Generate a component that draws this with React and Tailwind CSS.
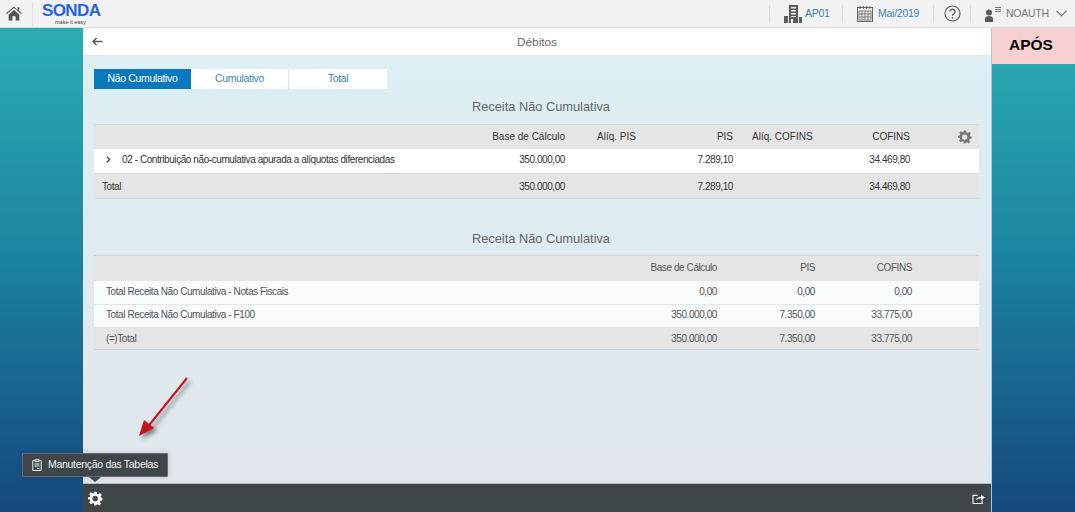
const F = "[font-family:'Liberation_Sans',Arial,sans-serif]";

function Gear({ className }) {
  return (
    <svg viewBox="0 0 24 24" className={className} fill="currentColor">
      <path fillRule="evenodd" d="M10 1h4l.6 3.2 1.9.8 2.7-1.9 2.8 2.8-1.9 2.7.8 1.9L23 11v4l-3.1.6-.8 1.9 1.8 2.7-2.8 2.8-2.7-1.9-1.9.8L13 23h-3l-.6-3.1-1.9-.8-2.7 1.9-2.8-2.8 1.9-2.7-.8-1.9L0 13v-3l3.1-.6.8-1.9L2 4.9l2.8-2.8 2.7 1.9 1.9-.8L10 1zm1.5 6.5a4.5 4.5 0 1 0 0 9 4.5 4.5 0 0 0 0-9z" />
    </svg>
  );
}

function Home() {
  return (
    <svg viewBox="0 0 18 16" className="w-[16px] h-[15px]" fill="#555">
      <path d="M9 0 0 7.6l.9 1L9 1.9l8.1 6.7.9-1-3-2.5V1h-2v3.4L9 0z" />
      <path d="M3 9 9 4l6 5v7h-4.2v-5H7.2v5H3V9z" />
    </svg>
  );
}

function Building() {
  return (
    <svg viewBox="0 0 18 18" className="w-[18px] h-[18px]" fill="#5c5c5c">
      <path fillRule="evenodd" d="M5 0h9v18H9v-4H7v4H5V0zm2 2v1.5h5V2H7zm0 3v1.5h5V5H7zm0 3v1.5h5V8H7zm0 3v1h5v-1H7z" />
      <path d="M0 11h4v7H0zM15 12h3v6h-3z" />
    </svg>
  );
}

function Calendar() {
  return (
    <svg viewBox="0 0 16 16" className="w-[16px] h-[16px]" fill="none" stroke="#666" strokeWidth="1">
      <rect x="0.5" y="1.5" width="15" height="14" />
      <path d="M3 0v3M6.3 0v3M9.6 0v3M13 0v3" />
      <path d="M2 5h12v9H2zM5 5v9M8 5v9M11 5v9M2 8h12M2 11h12" strokeWidth="0.8" />
    </svg>
  );
}

function Help() {
  return (
    <svg viewBox="0 0 18 18" className="w-[17px] h-[17px]" fill="none" stroke="#5a5a5a">
      <circle cx="9" cy="9" r="8" strokeWidth="1.2" />
      <path d="M6.3 7a2.7 2.5 0 1 1 4.2 2.1c-1 .7-1.5 1.1-1.5 2.3" strokeWidth="1.4" />
      <path d="M9 12.7v1.6" strokeWidth="1.6" />
    </svg>
  );
}

function User() {
  return (
    <svg viewBox="0 0 18 16" className="w-[18px] h-[16px]" fill="#5a5a5a">
      <circle cx="5" cy="6.5" r="3" />
      <path d="M1 16v-3.5c0-1.4 1.5-2.5 4-2.5s4 1.1 4 2.5V16H1z" />
      <path d="M11 1h6v1h-6zM11 3h6v1h-6zM11 5h6v1h-6z" fill="#777" />
    </svg>
  );
}

function Chevron() {
  return (
    <svg viewBox="0 0 12 7" className="w-[11px] h-[7px]" fill="none" stroke="#666" strokeWidth="1.1">
      <path d="M.6.6 6 6l5.4-5.4" />
    </svg>
  );
}

function Sep() {
  return <div className="w-px h-[18px] bg-[#dcdcdc]" />;
}

function Header() {
  return (
    <header className="h-[28px] shrink-0 flex items-center bg-[#f2f2f2] border-b border-[#dcdcdc] text-[10.5px] tracking-[-0.25px]">
      <div className="w-[32px] flex justify-end pr-[10px]">
        <Home />
      </div>
      <div className="w-px h-[24px] bg-[#e2e2e2]" />
      <div className="ml-[9px] w-[62px] flex flex-col items-start">
        <span className="text-[#2762e3] font-bold text-[17px] leading-[16px] tracking-[-0.6px]">SONDA</span>
        <span className="text-[#444] text-[5.5px] leading-[6px] tracking-normal ml-[13px]">make it easy</span>
      </div>
      <div className="flex-1" />
      <Sep />
      <div className="w-[72px] flex items-center gap-[3px] pl-[14px] text-[#3b84b5]">
        <Building />
        <span>AP01</span>
      </div>
      <Sep />
      <div className="w-[90px] flex items-center gap-[5px] pl-[14px] text-[#3b84b5]">
        <Calendar />
        <span>Mai/2019</span>
      </div>
      <Sep />
      <div className="w-[36px] flex justify-center">
        <Help />
      </div>
      <Sep />
      <div className="w-[104px] flex items-center pl-[13px] text-[#777]">
        <User />
        <span className="ml-[4px]">NOAUTH</span>
        <span className="ml-[7px]"><Chevron /></span>
      </div>
    </header>
  );
}

function Tabs() {
  return (
    <div className="ml-[11px] mt-[13px] w-[293px] h-[20px] flex text-[10.5px] tracking-[-0.35px] leading-[19px] text-center bg-white">
      <div className="w-[97px] bg-[#0a78bd] text-white">Não Cumulativo</div>
      <div className="w-[98px] text-[#3b84b5] border-r border-[#e4e4e4]">Cumulativo</div>
      <div className="w-[98px] text-[#3b84b5]">Total</div>
    </div>
  );
}

function Title({ children, className }) {
  return <div className={`pl-[8px] text-center text-[12.8px] leading-[18px] text-[#666] ${className}`}>{children}</div>;
}

function T1Row({ className, first, vals, gear }) {
  return (
    <div className={`flex items-center text-[#333] ${className}`}>
      <div className="w-[471px] flex items-center justify-between">
        <div className="flex-1">{first}</div>
        <div className="text-right">{vals[0]}</div>
      </div>
      <div className="w-[72px] pl-[32px] whitespace-nowrap">{vals[1]}</div>
      <div className="w-[96px] text-right">{vals[2]}</div>
      <div className="w-[88px] pl-[19px] whitespace-nowrap">{vals[3]}</div>
      <div className="w-[89px] text-right">{vals[4]}</div>
      <div className="flex-1 flex justify-end pr-[7px]">{gear}</div>
    </div>
  );
}

function Table1() {
  return (
    <div className="mx-[11px] mt-[8px] w-[885px]">
      <T1Row
        className="h-[25px] text-[10px] bg-[#e5e5e5] border-t border-[#d9d9d9] pb-[2px]"
        first=""
        vals={["Base de Cálculo", "Alíq. PIS", "PIS", "Alíq. COFINS", "COFINS"]}
        gear={<Gear className="w-[14px] h-[14px] text-[#777] relative top-px" />}
      />
      <T1Row
        className="h-[24px] text-[10px] tracking-[-0.42px] bg-white pb-[3px]"
        first={
          <div className="flex items-center pl-[12px]">
            <svg viewBox="0 0 6 8" className="w-[5px] h-[7px]" fill="none" stroke="#444" strokeWidth="1.6">
              <path d="M1 .6 4.4 4 1 7.4" />
            </svg>
            <span className="ml-[11px]">02 - Contribuição não-cumulativa apurada a alíquotas diferenciadas</span>
          </div>
        }
        vals={["350.000,00", "", "7.289,10", "", "34.469,80"]}
      />
      <T1Row
        className="h-[26px] text-[10px] tracking-[-0.42px] bg-[#e5e5e5] border-t border-[#d9d9d9] border-b border-b-[#d4dcde]"
        first={<span className="pl-[8px]">Total</span>}
        vals={["350.000,00", "", "7.289,10", "", "34.469,80"]}
      />
    </div>
  );
}

function T2Row({ className, label, vals }) {
  return (
    <div className={`flex items-center text-[10px] tracking-[-0.42px] text-[#555] ${className}`}>
      <div className="flex-1 pl-[12px]">{label}</div>
      <div className="w-[100px] text-right">{vals[0]}</div>
      <div className="w-[98px] text-right">{vals[1]}</div>
      <div className="w-[97px] text-right">{vals[2]}</div>
      <div className="w-[67px]" />
    </div>
  );
}

function Table2() {
  return (
    <div className="mx-[11px] mt-[7px] w-[885px]">
      <T2Row
        className="h-[25px] pb-[2px] bg-[#e5e5e5] border-t border-[#d4d4d4]"
        label=""
        vals={["Base de Cálculo", "PIS", "COFINS"]}
      />
      <T2Row
        className="h-[24px] pb-[2px] bg-[#f7fbfc] border-t border-[#dfe8ea]"
        label="Total Receita Não Cumulativa - Notas Fiscais"
        vals={["0,00", "0,00", "0,00"]}
      />
      <T2Row
        className="h-[23px] pb-[3px] bg-[#f7fbfc] border-t border-[#dfe8ea]"
        label="Total Receita Não Cumulativa - F100"
        vals={["350.000,00", "7.350,00", "33.775,00"]}
      />
      <T2Row
        className="h-[23px] bg-[#e5e5e5] border-b border-[#d2d5d7]"
        label="(=)Total"
        vals={["350.000,00", "7.350,00", "33.775,00"]}
      />
    </div>
  );
}

function Center() {
  return (
    <main className="w-[908px] flex flex-col">
      <div className="h-[28px] shrink-0 bg-white border-b border-[#e6e6e6] flex items-center relative">
        <svg viewBox="0 0 12 10" className="absolute left-[8px] top-[9px] w-[12px] h-[9px]" fill="none" stroke="#555" strokeWidth="1.5">
          <path d="M12 5H1.5M5.5 1 1.5 5l4 4" />
        </svg>
        <div className="w-full pt-[2px] text-center text-[11.8px] text-[#666]">Débitos</div>
      </div>
      <div className="flex-1 bg-gradient-to-b from-[#ddeff3] to-[#e0e6ec]">
        <Tabs />
        <Title className="mt-[9px]">Receita Não Cumulativa</Title>
        <Table1 />
        <Title className="mt-[31px]">Receita Não Cumulativa</Title>
        <Table2 />
      </div>
      <div className="h-[29px] shrink-0 bg-[#3f4649] border-t border-[#b8bfc3] flex items-center justify-between pl-[5px] pr-[5px]">
        <Gear className="w-[15px] h-[15px] text-white" />
        <svg viewBox="0 0 14 12" className="w-[13px] h-[11px] mr-px" fill="none" stroke="#f2f2f2" strokeWidth="1.3">
          <path d="M6 2.5H1v9h10V8" />
          <path d="M4 8c.6-2.7 2.8-4 5.6-4V1.6L14 5l-4.4 3.3V6C7.4 6 5.5 6.6 4 8z" fill="#f2f2f2" stroke="none" />
        </svg>
      </div>
    </main>
  );
}

export default function App() {
  return (
    <div className={`relative w-[1075px] h-[512px] overflow-hidden flex flex-col ${F}`}>
      <Header />
      <div className="flex-1 flex bg-gradient-to-b from-[#2cadb5] via-[#1c86a0] via-45% to-[#15487f]">
        <div className="w-[83px]" />
        <Center />
        <aside className="w-[84px] border-l border-[#9ecfd4]">
          <div className="h-[36px] pr-[5px] bg-[#f8d0d2] text-center text-[15.5px] font-bold leading-[34px] text-black">APÓS</div>
        </aside>
      </div>

      <svg className="absolute left-[130px] top-[370px] w-[70px] h-[76px] overflow-visible drop-shadow-[3px_3px_2px_rgba(0,0,0,0.45)]" viewBox="130 370 70 76" fill="none">
        <path d="M187 378 146 429" stroke="#c8141c" strokeWidth="2" />
        <path d="M139 436l5-16 10 8z" fill="#c8141c" />
      </svg>

      <div className="absolute left-[22px] top-[453px] w-[146px] h-[24px] bg-[#3f4649] border border-[#666c70] rounded-[1px] flex items-center pl-[9px] text-[10.5px] tracking-[-0.3px] text-[#f2f2f2] shadow-[0_0_6px_rgba(0,0,0,0.15)]">
        <svg viewBox="0 0 10 12" className="w-[10px] h-[12px] shrink-0" fill="none" stroke="#eee" strokeWidth="1">
          <path d="M3 1.5H.8v10h8.4v-10H7" />
          <path d="M3 .6h4v2H3zM2.5 5h5M2.5 7h5M5 9.5h2.5" />
        </svg>
        <span className="ml-[6px] whitespace-nowrap">Manutenção das Tabelas</span>
      </div>
      <div className="absolute left-[89px] top-[477px] w-0 h-0 border-x-[6px] border-x-transparent border-t-[5px] border-t-[#3f4649]" />
    </div>
  );
}
